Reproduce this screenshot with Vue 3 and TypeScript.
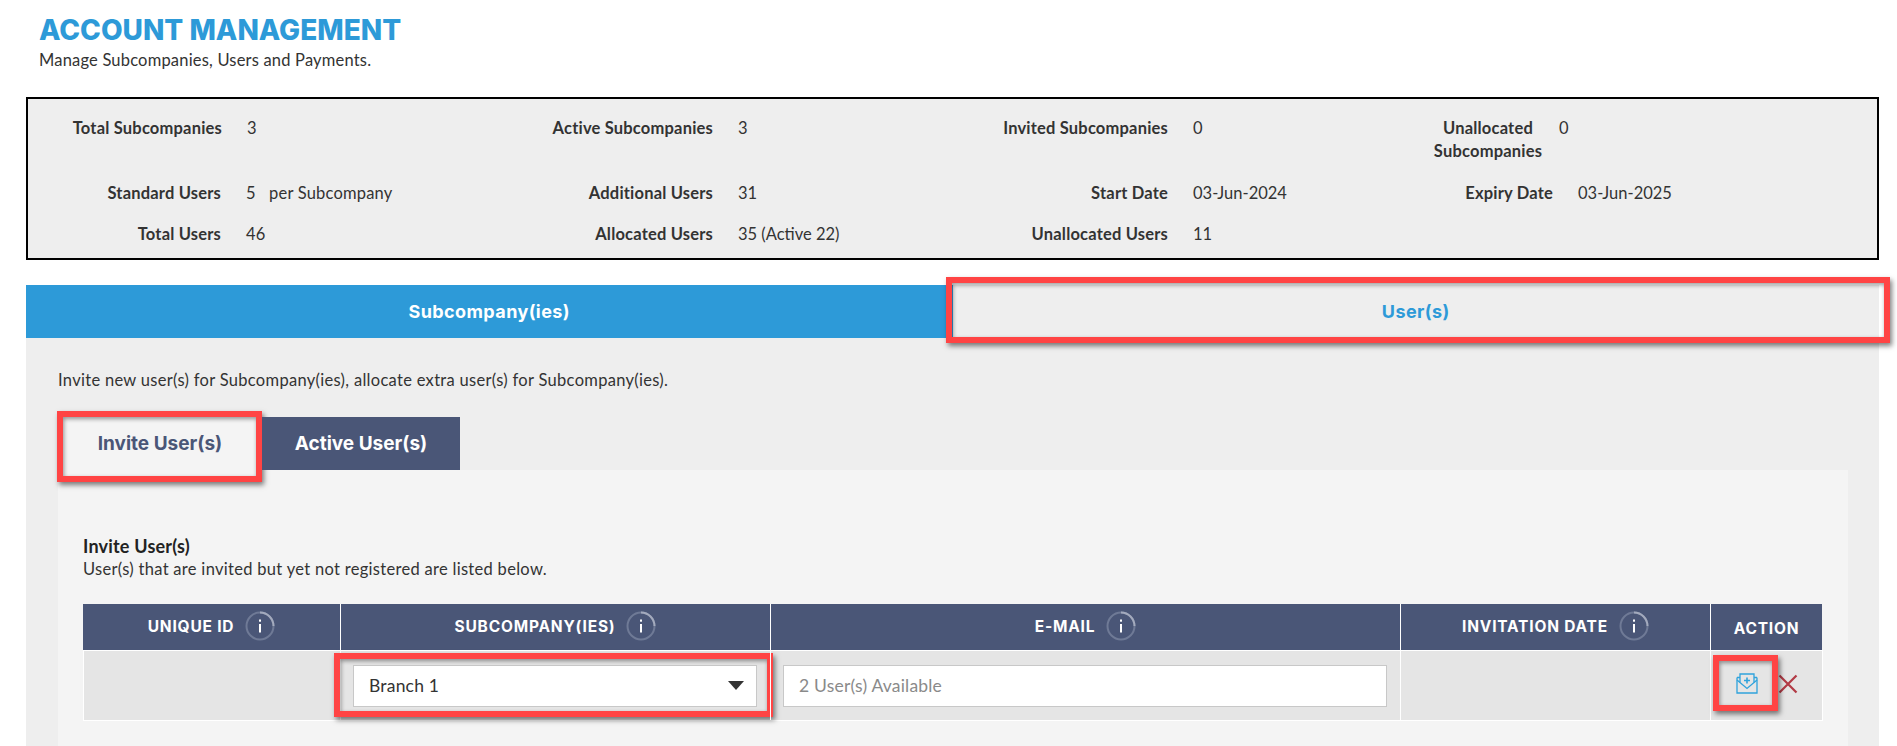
<script setup lang="ts">
interface Stat { label: string; value: string; cls?: string }
const rows: Stat[][] = [
  [
    { label: 'Total Subcompanies', value: '3' },
    { label: 'Active Subcompanies', value: '3' },
    { label: 'Invited Subcompanies', value: '0' },
    { label: 'Unallocated Subcompanies', value: '0', cls: 'wrap' },
  ],
  [
    { label: 'Standard Users', value: '5\u00a0\u00a0 per Subcompany', cls: 'tight' },
    { label: 'Additional Users', value: '31' },
    { label: 'Start Date', value: '03-Jun-2024' },
    { label: 'Expiry Date', value: '03-Jun-2025' },
  ],
  [
    { label: 'Total Users', value: '46', cls: 'tight' },
    { label: 'Allocated Users', value: '35 (Active 22)' },
    { label: 'Unallocated Users', value: '11' },
  ],
]
const columns = [
  { title: 'UNIQUE ID', info: true },
  { title: 'SUBCOMPANY(IES)', info: true },
  { title: 'E-MAIL', info: true },
  { title: 'INVITATION DATE', info: true },
  { title: 'ACTION', info: false },
]
</script>

<template>
  <div class="page">
    <header class="head">
      <h1>ACCOUNT MANAGEMENT</h1>
      <p>Manage Subcompanies, Users and Payments.</p>
    </header>

    <section class="stats">
      <div v-for="(row, r) in rows" :key="r" class="stat-row">
        <div v-for="(s, c) in row" :key="s.label" class="stat" :class="[`col${c + 1}`, s.cls]">
          <span class="label">{{ s.label }}</span>
          <span class="value">{{ s.value }}</span>
        </div>
      </div>
    </section>

    <nav class="main-tabs">
      <div class="main-tab on">Subcompany(ies)</div>
      <div class="main-tab off">User(s)<i class="mark m-user"></i></div>
    </nav>

    <section class="panel">
      <p class="intro">Invite new user(s) for Subcompany(ies), allocate extra user(s) for Subcompany(ies).</p>
      <div class="sub-tabs">
        <div class="sub-tab active">Invite User(s)<i class="mark m-invite"></i></div>
        <div class="sub-tab">Active User(s)</div>
      </div>
      <div class="inner">
        <h2>Invite User(s)</h2>
        <p class="note">User(s) that are invited but yet not registered are listed below.</p>
        <div class="table">
          <div class="th-row">
            <div v-for="col in columns" :key="col.title" class="th">
              <span>{{ col.title }}</span>
              <svg v-if="col.info" class="info" viewBox="0 0 30 30" width="30" height="30" aria-hidden="true">
                <circle cx="15" cy="15" r="13.500" fill="none" stroke="#6f7a96" stroke-width="2" />
                <path d="M15 1.500A13.500 13.500 0 0 1 28.500 15" fill="none" stroke="#a3aabd" stroke-width="2" />
                <rect x="14" y="13" width="2" height="8.500" fill="#fff" />
                <rect x="14" y="8.500" width="2" height="2.200" fill="#fff" />
              </svg>
            </div>
          </div>
          <div class="td-row">
            <div class="td"></div>
            <div class="td">
              <div class="select-wrap">
                <select class="control">
                  <option>Branch 1</option>
                </select>
                <i class="caret"></i>
              </div>
              <i class="mark m-select"></i>
            </div>
            <div class="td">
              <input class="control" type="text" placeholder="2 User(s) Available" />
            </div>
            <div class="td"></div>
            <div class="td action">
              <svg class="mail" viewBox="0 0 22 21" width="22" height="21" aria-hidden="true">
                <g fill="none" stroke="#2fa3dc" stroke-width="1.3">
                  <path d="M1 4.500V20H21V4.500" />
                  <path d="M1 4.500H4M21 4.500H18" />
                  <path d="M1 7 11 15.500 21 7" />
                  <path d="M4 9.500V1H18V9.500" />
                  <path d="M11 4.500v6M8 7.500h6" stroke-width="1.600" />
                </g>
              </svg>
              <svg class="cross" viewBox="0 0 20 20" width="20" height="20" aria-hidden="true">
                <path d="M1.500 1.500 18.500 18.500M18.500 1.500 1.500 18.500" stroke="#b23a45" stroke-width="2.200" fill="none" />
              </svg>
              <i class="mark m-action"></i>
            </div>
          </div>
        </div>
      </div>
    </section>
  </div>
</template>

<style>
html, body { margin: 0; background: #fff; overflow: hidden; }
</style>

<style scoped>
.page {
  width: 1897px;
  height: 746px;
  overflow: hidden;
  box-sizing: border-box;
  padding: 0 18px 0 26px;
  background: #fff;
  color: #333;
  font-family: "Lato", "Open Sans", sans-serif;
  font-size: 16.500px;
}
.head { padding: 14px 0 0 13px; height: 97px; box-sizing: border-box; }
h1 {
  margin: 0;
  color: #2d9ad8;
  font-family: "Inter", sans-serif;
  font-weight: 800;
  font-size: 28px;
  line-height: 32px;
}
.head p { margin: 4px 0 0; line-height: 20px; letter-spacing: .19px; }

.stats {
  height: 163px;
  box-sizing: border-box;
  border: 2px solid #000;
  background: #eee;
  padding-top: 18px;
  display: flex;
  flex-direction: column;
  gap: 18.500px;
  line-height: 23px;
}
.stat-row { display: grid; grid-template-columns: 470px 453px 481px 1fr; }
.stat { display: flex; gap: 25px; }
.label { font-weight: 700; text-align: right; flex: none; white-space: nowrap; letter-spacing: .19px; }
.col1 .label { width: 194px; }
.col2 .label { width: 215px; }
.col3 .label { width: 217px; }
.col4 .label { width: 121px; }
.stat.tight .label { width: 193px; }
.stat.tight .value { letter-spacing: .2px; }
.stat.wrap { margin-left: 1px; gap: 16px; }
.stat.wrap .label { white-space: normal; text-align: center; width: 110px; }

.main-tabs { display: flex; margin-top: 25px; height: 53px; }
.main-tab {
  flex: 1;
  position: relative;
  display: flex;
  align-items: center;
  justify-content: center;
  font-family: "Inter", sans-serif;
  font-weight: 700;
  font-size: 18px;
  letter-spacing: .4px;
}
.main-tab.on { background: #2d9ad8; color: #fff; }
.main-tab.off { background: #eee; color: #2d9ad8; }

.panel { background: #eee; padding: 0 31px 0 32px; height: 420px; box-sizing: border-box; }
.intro { margin: 0; padding-top: 31px; line-height: 22px; letter-spacing: .3px; }
.sub-tabs { display: flex; margin-top: 26px; height: 53px; }
.sub-tab {
  position: relative;
  width: 198px;
  display: flex;
  align-items: center;
  justify-content: center;
  background: #4a5677;
  color: #fff;
  font-family: "Inter", sans-serif;
  font-weight: 700;
  font-size: 19px;
}
.sub-tab.active { width: 204px; background: #f4f4f4; color: #4a5677; }

.inner { background: #f4f4f4; padding: 64px 25px 0; height: 300px; box-sizing: border-box; }
h2 { margin: 0; font-size: 18px; font-weight: 700; line-height: 25px; color: #222; letter-spacing: .2px; }
.note { margin: 0 0 25px; line-height: 20px; letter-spacing: .3px; }

.table { font-family: "Inter", sans-serif; }
.th-row { display: grid; grid-template-columns: 257px 430px 630px 310px 112px; background: #4a5677; height: 46px; width: 1739px; }
.td-row { display: grid; grid-template-columns: 257px 430px 630px 310px 113px; background: #e5e5e5; height: 71px; width: 1740px; border-top: 1px solid #fff; border-bottom: 1px solid #fff; box-sizing: border-box; }
.th {
  display: flex;
  align-items: center;
  justify-content: center;
  gap: 11px;
  color: #fff;
  font-weight: 700;
  font-size: 15.500px;
  letter-spacing: .8px;
  border-left: 1px solid #fff;
  padding-bottom: 2px;
  box-sizing: border-box;
}
.th:first-child { border-left: 0; }
.th:last-child { padding: 3px 0 0; }
.info { flex: none; }
.td {
  position: relative;
  display: flex;
  align-items: center;
  border-left: 1px solid #fff;
  padding: 0 13px 0 12px;
  box-sizing: border-box;
}
.td:last-child { border-right: 1px solid #fff; }
.select-wrap { position: relative; width: 100%; }
.control {
  display: block;
  width: 100%;
  height: 42px;
  box-sizing: border-box;
  appearance: none;
  background: #fff;
  border: 1px solid #c8c8c8;
  border-radius: 0;
  padding: 0 15px;
  margin: 0;
  font-family: "Lato", "Open Sans", sans-serif;
  font-size: 17.500px;
  letter-spacing: .2px;
  color: #333;
  outline: none;
}
.control::placeholder { color: #8a8a8a; opacity: 1; }
.caret {
  position: absolute;
  right: 13px;
  top: 16px;
  width: 0;
  height: 0;
  border-left: 8px solid transparent;
  border-right: 8px solid transparent;
  border-top: 9px solid #333;
}
.action { padding: 0 0 4px 25px; }
.mail { flex: none; margin-right: 20px; }
.cross { flex: none; }

.mark {
  position: absolute;
  border: 6px solid #ff4444;
  box-shadow: 2px 3px 5px rgba(0, 0, 0, .5), inset 1px 2px 4px rgba(0, 0, 0, .4);
  pointer-events: none;
  box-sizing: border-box;
}
.m-user { top: -8px; bottom: -5px; left: -7px; right: -11px; }
.m-invite { top: -6px; bottom: -12px; left: -1px; right: 0; }
.m-select { top: 2px; bottom: 3px; left: -7px; right: -3px; }
.m-action { top: 4px; bottom: 9px; left: 2px; right: 44px; }
</style>
